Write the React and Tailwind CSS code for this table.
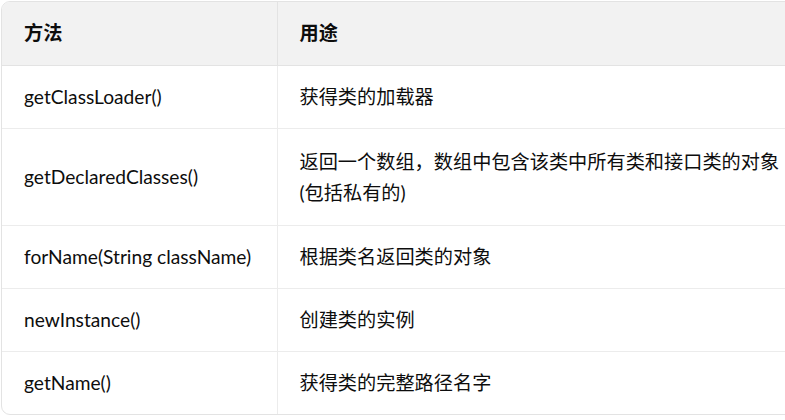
const ROWS = [
  ['getClassLoader()', '获得类的加载器'],
  ['getDeclaredClasses()', '返回一个数组，数组中包含该类中所有类和接口类的对象(包括私有的)'],
  ['forName(String className)', '根据类名返回类的对象'],
  ['newInstance()', '创建类的实例'],
  ['getName()', '获得类的完整路径名字'],
]

const CELL = 'px-[22px] py-0 text-left align-middle'

export default function App() {
  return (
    <div
      className="h-[420px] w-[785px] overflow-hidden bg-white pl-[1px] pt-[1px] text-[19.2px] text-[#0d0d0d]"
      style={{ fontFamily: 'Lato, "Noto Sans CJK SC", sans-serif' }}
    >
      <div className="w-[820px] overflow-hidden rounded-[9px] border border-[#e3e3e3]">
        <table className="w-full table-fixed border-collapse">
          <colgroup>
            <col className="w-[275px]" />
            <col />
          </colgroup>
          <thead>
            <tr className="h-[63px] border-b border-[#e3e3e3] bg-[#f2f2f2]">
              <th className={`${CELL} border-r border-[#e3e3e3] font-bold`}>方法</th>
              <th className={`${CELL} font-bold`}>用途</th>
            </tr>
          </thead>
          <tbody>
            {ROWS.map(([method, use], i) => (
              <tr key={method} className={`${i === 1 ? 'h-[97px]' : 'h-[63px]'} ${i < ROWS.length - 1 ? 'border-b border-[#ececec]' : ''}`}>
                <td className={`${CELL} border-r border-[#ececec] leading-[31px]`}>{method}</td>
                <td className={`${CELL} leading-[31px]`}>
                  <div className="w-[490px]">{use}</div>
                </td>
              </tr>
            ))}
          </tbody>
        </table>
      </div>
    </div>
  )
}
